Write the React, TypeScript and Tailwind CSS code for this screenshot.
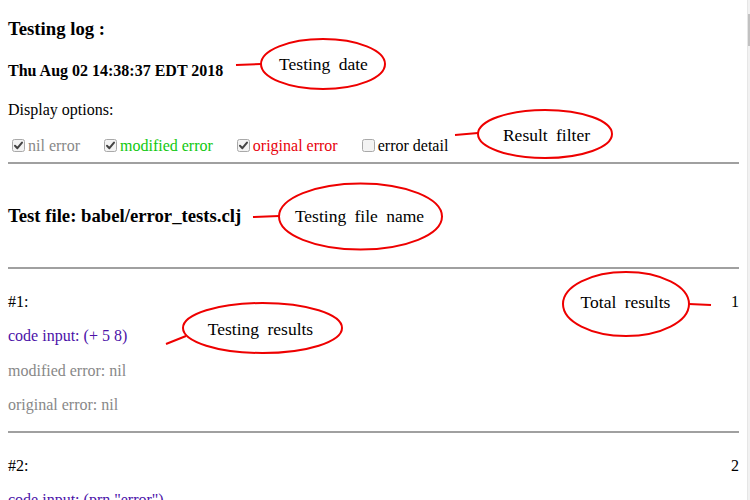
const serif = { fontFamily: '"Liberation Serif", "Times New Roman", serif' };

function Box({ checked }: { checked: boolean }) {
  return (
    <svg width="13" height="13" viewBox="0 0 13 13" className="inline-block ml-[4px] mr-[3px] align-[-1px]">
      <rect x="0.5" y="0.5" width="12" height="12" rx="2" fill="#f3f3f3" stroke="#a9a9a9" />
      {checked && <path d="M3 6.8 L5.4 9.2 L10 3.6" fill="none" stroke="#444" strokeWidth="2" strokeLinecap="round" strokeLinejoin="round" />}
    </svg>
  );
}

function Result({ n, code }: { n: number; code: string }) {
  return (
    <div className="leading-[1.15]">
      <div className="flex justify-between">
        <span>#{n}:</span>
        <span>{n}</span>
      </div>
      <p className="mt-4 text-[#4b12a8]">code input: {code}</p>
      <p className="mt-4 text-[#888]">modified error: nil</p>
      <p className="mt-4 text-[#888]">original error: nil</p>
    </div>
  );
}

export default function App() {
  return (
    <div className="relative flex w-[750px] h-[500px] overflow-hidden bg-white text-black text-[16px]" style={serif}>
      <div className="w-[747px] px-2">
        <h3 className="mt-[18px] text-[18.72px] font-bold leading-[21px]">Testing log :</h3>
        <h4 className="mt-[23px] text-[16px] font-bold leading-[18px]">Thu Aug 02 14:38:37 EDT 2018</h4>
        <p className="mt-[21px] leading-[18px]">Display options:</p>
        <div className="mt-[17px] h-[19px] leading-[19px] whitespace-nowrap">
          <Box checked />
          <span className="mr-5 text-[#888]">nil error</span>
          <Box checked />
          <span className="mr-5 text-[#10c810]">modified error</span>
          <Box checked />
          <span className="mr-5 text-[#e8000b]">original error</span>
          <Box checked={false} />
          <span>error detail</span>
        </div>
        <hr className="mt-[7px] border-t-2 border-[#a0a0a0]" />
        <h3 className="mt-[41px] text-[18.72px] font-bold leading-[21px]">Test file: babel/error_tests.clj</h3>
        <hr className="mt-[41px] border-t-2 border-[#a0a0a0]" />
        <div className="mt-6">
          <Result n={1} code="(+ 5 8)" />
        </div>
        <hr className="mt-4 border-t-2 border-[#a0a0a0]" />
        <div className="mt-6">
          <Result n={2} code={'(prn "error")'} />
        </div>
      </div>
      <div className="flex-1 bg-[#f1f1f1] border-l border-[#e6e6e6] pt-[14px]">
        <div className="h-[32px] bg-[#c1c1c1]" />
      </div>

      {/* annotations */}
      <svg className="absolute inset-0 pointer-events-none" width="750" height="500" viewBox="0 0 750 500">
        <g fill="none" stroke="#ee0000" strokeWidth="2">
          <ellipse cx="323" cy="64" rx="62" ry="25" />
          <line x1="236" y1="65" x2="261" y2="64" />
          <ellipse cx="545" cy="134" rx="67" ry="24" />
          <line x1="455" y1="135" x2="478" y2="133" />
          <ellipse cx="360.5" cy="216.5" rx="81.5" ry="33" />
          <line x1="253" y1="217" x2="279" y2="216" />
          <ellipse cx="626" cy="304" rx="63" ry="32" />
          <line x1="689" y1="304" x2="711" y2="305" />
          <ellipse cx="262.5" cy="328" rx="79.5" ry="25" />
          <line x1="166" y1="344" x2="186" y2="336" />
        </g>
        <g fill="#000" fontSize="17.5" style={{ ...serif, wordSpacing: '4px' }} textAnchor="middle">
          <text x="323.5" y="70">Testing date</text>
          <text x="546.5" y="141">Result filter</text>
          <text x="359.5" y="222">Testing file name</text>
          <text x="625.5" y="308">Total results</text>
          <text x="260.5" y="335">Testing results</text>
        </g>
      </svg>
    </div>
  );
}
